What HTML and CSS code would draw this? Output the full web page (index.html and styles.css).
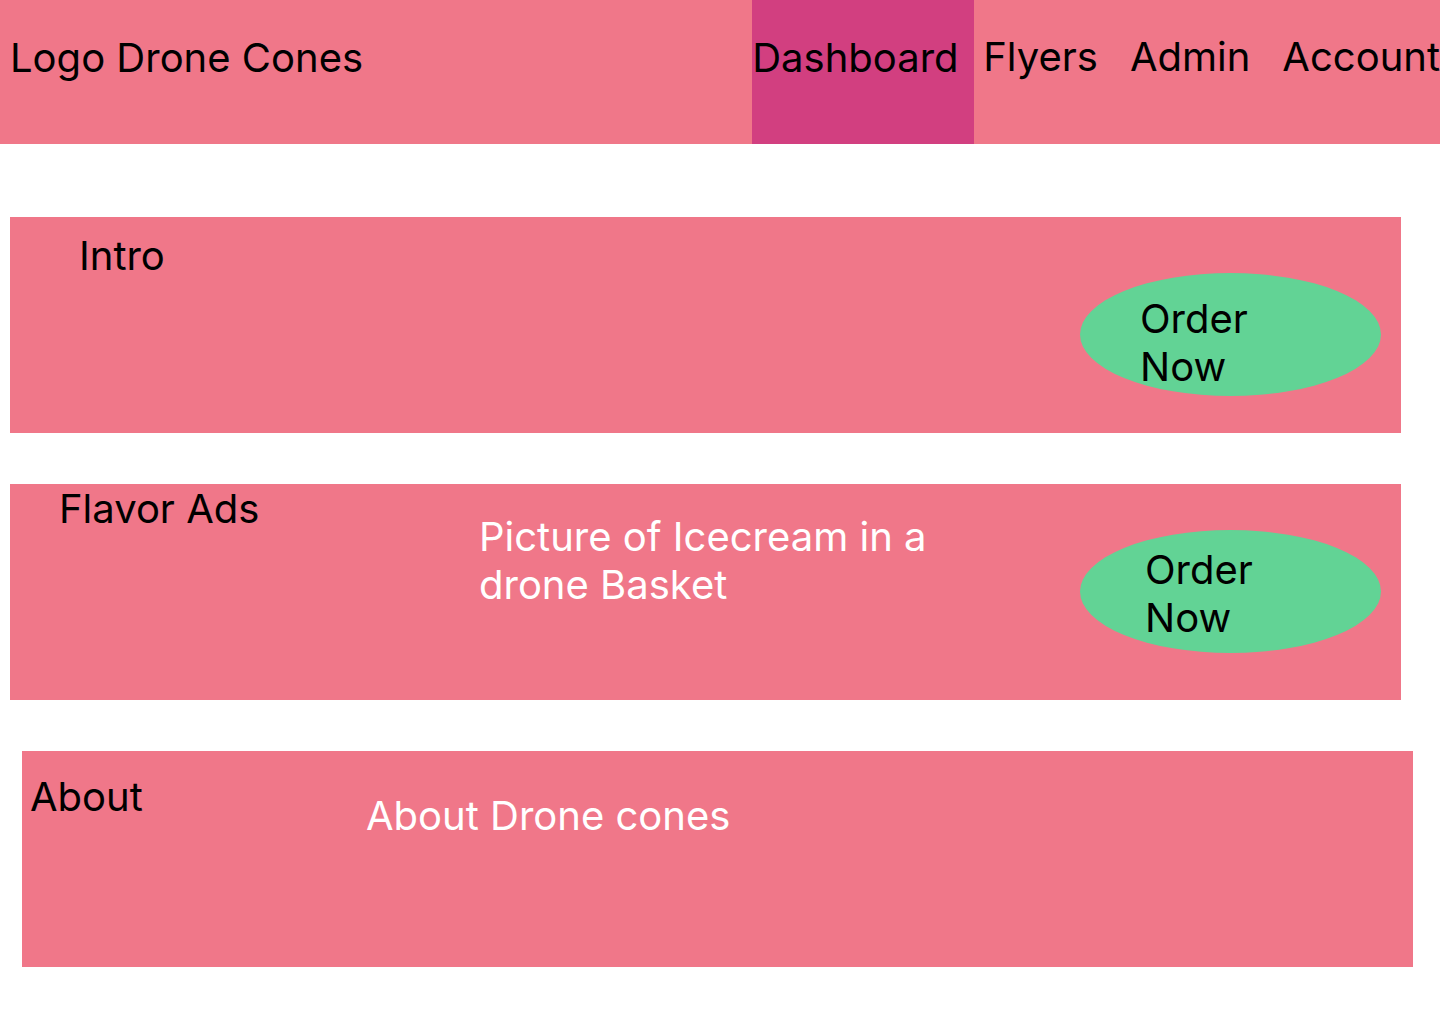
FILE: index.html
```html
<!DOCTYPE html>
<html lang="en">
<head>
  <meta charset="utf-8">
  <meta name="viewport" content="width=device-width, initial-scale=1">
  <title>Drone Cones</title>
  <link rel="stylesheet" href="styles.css">
</head>
<body>
  <header class="site-header">
    <div class="logo">Logo Drone Cones</div>
    <nav class="nav">
      <a class="nav-link nav-link-active" href="#dashboard" aria-current="page">Dashboard</a>
      <a class="nav-link nav-link-flyers" href="#flyers">Flyers</a>
      <a class="nav-link nav-link-admin" href="#admin">Admin</a>
      <a class="nav-link" href="#account">Account</a>
    </nav>
  </header>
  <main class="content">
    <section class="panel panel-intro">
      <h2 class="panel-title">Intro</h2>
      <button class="order-button" type="button">Order<br>Now</button>
    </section>
    <section class="panel panel-flavors">
      <h2 class="panel-title">Flavor Ads</h2>
      <p class="panel-text">Picture of Icecream in a drone Basket</p>
      <button class="order-button" type="button">Order<br>Now</button>
    </section>
    <section class="panel panel-about">
      <h2 class="panel-title">About</h2>
      <p class="panel-text">About Drone cones</p>
    </section>
  </main>
</body>
</html>
```

FILE: styles.css
```css
* {
  box-sizing: border-box;
}

body {
  margin: 0;
  background: #fff;
  color: #000;
  font: 400 40px/48px Inter, sans-serif;
}

.site-header {
  display: flex;
  justify-content: space-between;
  min-height: 144px;
  background: #f07789;
}

.logo {
  padding: 34px 0 0 10px;
}

.nav {
  display: flex;
}

.nav-link {
  padding-top: 33px;
  color: inherit;
  text-decoration: none;
}

.nav-link-active {
  width: 222px;
  padding-top: 34px;
  background: #d23f80;
}

.nav-link-flyers {
  padding-left: 9px;
}

.nav-link-admin {
  padding: 33px 32px 0;
}

.content {
  display: flex;
  flex-direction: column;
  gap: 51px;
  padding: 73px 27px 57px 10px;
}

.panel {
  display: flex;
  align-items: flex-start;
  min-height: 216px;
  margin-right: 12px;
  background: #f07789;
}

.panel-title {
  margin: 0;
  font: inherit;
}

.panel-text {
  margin: 0;
  color: #fff;
}

.order-button {
  flex: none;
  width: 301px;
  height: 123px;
  margin: 56px 20px 0 auto;
  padding: 16px 0 0 60px;
  border: 0;
  border-radius: 50%;
  background: #62d395;
  color: inherit;
  font: inherit;
  text-align: left;
  cursor: pointer;
}

.panel-intro .panel-title {
  padding: 15px 0 0 69px;
}

.panel-flavors .panel-title {
  width: 469px;
  padding: 1px 0 0 49px;
}

.panel-flavors .panel-text {
  width: 480px;
  padding-top: 29px;
}

.panel-flavors .order-button {
  margin-top: 46px;
  padding: 4px 0 0 65px;
}

.panel-about {
  margin: 0 0 0 12px;
}

.panel-about .panel-title {
  width: 344px;
  padding: 22px 0 0 8px;
}

.panel-about .panel-text {
  padding-top: 41px;
}
```
